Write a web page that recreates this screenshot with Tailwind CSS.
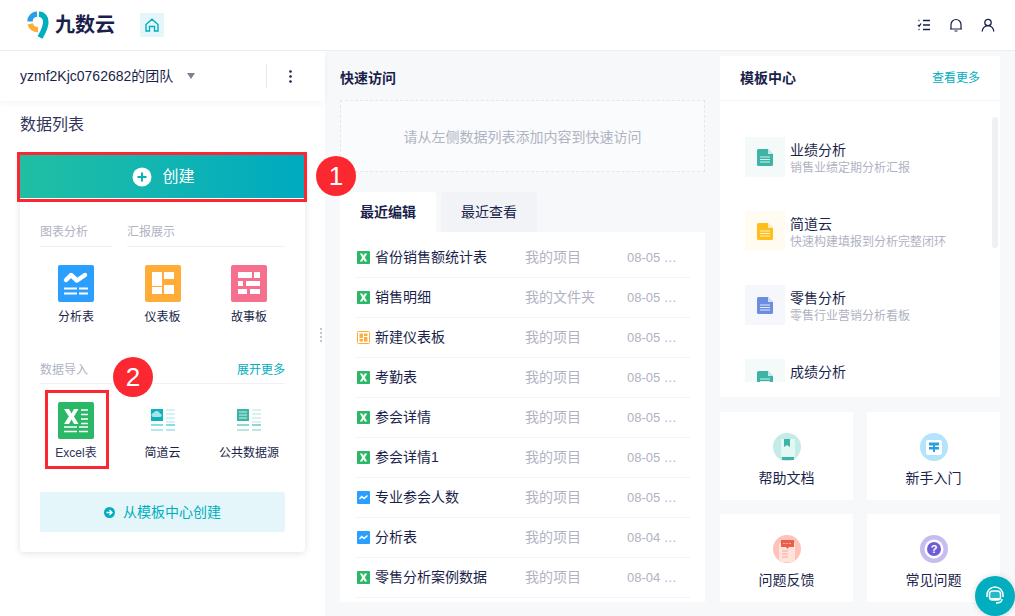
<!DOCTYPE html>
<html lang="zh-CN">
<head>
    <meta charset="UTF-8">
    <title>九数云</title>
    <script src="https://cdn.jsdelivr.net/npm/@tailwindcss/browser@4"></script>
</head>
<body class="h-[616px] w-[1015px] overflow-hidden bg-[#f7f8fa] font-['Liberation_Sans','Noto_Sans_CJK_SC',sans-serif] text-[14px] text-[#1a1f4b]">
    <!-- shared icons -->
    <svg class="hidden">
        <symbol id="xls" viewBox="0 0 13 13"><rect width="13" height="13" rx="1" fill="#2bb866"/><path d="M2.800 2.500h2.400l1.300 2.300 1.300-2.300h2.400L7.800 6.500l2.400 4H7.800L6.500 8.200 5.200 10.500H2.800l2.400-4z" fill="#fff"/></symbol>
        <symbol id="line" viewBox="0 0 13 13"><rect width="13" height="13" rx="1" fill="#2b9fff"/><path d="M2.500 8l2.200-2.500L7 7.500 10.500 4.500" fill="none" stroke="#fff" stroke-width="1.500"/></symbol>
        <symbol id="dash" viewBox="0 0 13 13"><rect x=".5" y=".5" width="12" height="12" rx="1" fill="#fff" stroke="#ffac38"/><path d="M2.500 2.500h3.500v4.500H2.500zM7 2.500h3.500V5H7zM2.500 8H6v2.500H2.500zM7 6h3.500v4.500H7z" fill="#ffac38"/></symbol>
        <symbol id="doc" viewBox="0 0 16 17"><path d="M1.500 0H11l5 5v10.500a1.500 1.500 0 0 1-1.500 1.500h-13A1.500 1.500 0 0 1 0 15.500v-14A1.500 1.500 0 0 1 1.500 0z" fill="currentColor"/><path d="M11 0l5 5h-5z" fill="#fff" opacity=".7"/><path d="M3 8h10M3 10.500h10M3 13h10" stroke="#fff" stroke-opacity=".8"/></symbol>
    </svg>

    <!-- Шапка -->
    <header class="flex h-[51px] items-center border-b border-[#eceef1] bg-white pl-[27px] pr-[20px]">
        <svg width="22" height="28" viewBox="0 0 22 28" fill="none" stroke-width="5.500">
            <path d="M3 10.500A7.500 7.500 0 0 1 10 3" stroke="#2b9fe6"/>
            <path d="M12 3A7.500 7.500 0 0 1 18.800 11C18.800 17 15.500 22 13 26.500" stroke="#00aebf"/>
            <path d="M3.200 12.800A7.500 7.500 0 0 0 11 18.500" stroke="#ffac38"/>
        </svg>
        <span class="ml-[6px] text-[20px] leading-none font-bold text-[#1a1f4b]">九数云</span>
        <div class="ml-[25px] flex h-6 w-6 items-center justify-center bg-[#e4f6f9]">
            <svg width="14" height="14" viewBox="0 0 14 14" fill="none" stroke="#00aebf" stroke-width="1.400"><path d="M1 6.500 7 1.200l6 5.300V13H9.500V8.500h-5V13H1z"/></svg>
        </div>
        <div class="ml-auto flex items-center gap-[18px]">
            <svg width="14" height="14" viewBox="0 0 14 14" fill="none" stroke="#1a1f4b" stroke-width="1.300"><path d="M6 2.500h7M6 7h7M6 11.500h7M1 7l1.200 1.200L4 5.500M1.500 2.500h1M1.500 11.500h1"/></svg>
            <svg width="14" height="14" viewBox="0 0 14 14" fill="none" stroke="#1a1f4b" stroke-width="1.200"><path d="M2 11V6.500a5 5 0 0 1 10 0V11zM1 11h12M5.500 13h3"/></svg>
            <svg width="14" height="14" viewBox="0 0 14 14" fill="none" stroke="#1a1f4b" stroke-width="1.300"><circle cx="7" cy="4.500" r="3.200"/><path d="M1.200 13.500a5.800 5.800 0 0 1 11.600 0"/></svg>
        </div>
    </header>

    <div class="flex h-[565px]">
        <!-- Сайдбар -->
        <aside class="relative h-full w-[325px] shrink-0 bg-white">
            <div class="flex h-[50px] items-center pl-5 pr-[33px] text-[14px] shadow-[0_3px_6px_rgba(30,40,80,0.04)]">
                <span>yzmf2Kjc0762682的团队</span>
                <span class="ml-[14px] h-0 w-0 border-x-[4px] border-t-[6px] border-x-transparent border-t-[#7c8090]"></span>
                <div class="ml-auto flex h-6 items-center border-l border-[#e8eaee] pl-[22px]">
                    <svg width="3" height="13" viewBox="0 0 3 13" fill="#1a1f4b"><circle cx="1.500" cy="1.500" r="1.300"/><circle cx="1.500" cy="6.500" r="1.300"/><circle cx="1.500" cy="11.500" r="1.300"/></svg>
                </div>
            </div>
            <h2 class="pl-5 pt-[14px] text-[16px] leading-[20px] text-[#30345a]">数据列表</h2>

            <div class="ml-5 mt-5 w-[285px] rounded-b-[4px] shadow-[0_1px_6px_rgba(30,40,80,0.14)]">
                <button class="flex h-[43px] w-full items-center justify-center gap-[10px] bg-gradient-to-r from-[#20bfa3] to-[#00aac0] pl-[2px] text-[16px] text-white">
                    <svg width="20" height="20" viewBox="0 0 20 20"><circle cx="10" cy="10" r="9.500" fill="#fff"/><path d="M10 5.500v9M5.500 10h9" stroke="#0bb2b2" stroke-width="2"/></svg>
                    创建
                </button>
                <div class="px-5 pb-5 pt-[26px]">
                    <div class="flex gap-[15px] text-[12px] leading-[16px] text-[#b0b3c3]">
                        <div class="w-[72px] border-b border-[#f0f1f5] pb-[6px]">图表分析</div>
                        <div class="flex-1 border-b border-[#f0f1f5] pb-[6px]">汇报展示</div>
                    </div>
                    <div class="mt-[18px] grid grid-cols-[72px_101px_72px] text-center text-[12px] leading-[16px]">
                        <div class="flex flex-col items-center">
                            <svg width="36" height="37" viewBox="0 0 36 37"><rect width="36" height="37" rx="2" fill="#2b9fff"/><path d="M8 15l5-5 6 5.500L27 10" fill="none" stroke="#fff" stroke-width="4.500" stroke-linecap="round" stroke-linejoin="round"/><path d="M6 23.500h13M21 23.500h9M6 28.500h13M21 28.500h9" stroke="#fff" stroke-width="2"/></svg>
                            <span class="mt-[7px]">分析表</span>
                        </div>
                        <div class="flex flex-col items-center">
                            <svg width="36" height="37" viewBox="0 0 36 37"><rect width="36" height="37" rx="2" fill="#ffac38"/><path d="M7 7h10v14H7zM19 7h10v7H19zM7 22h10v7H7zM19 20h10v9H19z" fill="#fff"/></svg>
                            <span class="mt-[7px]">仪表板</span>
                        </div>
                        <div class="flex flex-col items-center">
                            <svg width="36" height="37" viewBox="0 0 36 37"><rect width="36" height="37" rx="2" fill="#f56f8f"/><path d="M7 7h14v6H7zM23 7h6v6h-6zM7 16h5v5H7zM15 16h14v5H15zM7 24h9v5H7zM19 24h10v5H19z" fill="#fff"/></svg>
                            <span class="mt-[7px]">故事板</span>
                        </div>
                    </div>

                    <div class="mt-[37px] flex justify-between border-b border-[#f0f1f5] pb-[5px] text-[12px] leading-[16px]">
                        <span class="text-[#b0b3c3]">数据导入</span>
                        <span class="text-[#00aebf]">展开更多</span>
                    </div>
                    <div class="mt-[18px] grid grid-cols-[72px_101px_72px] text-center text-[12px] leading-[16px]">
                        <div class="flex flex-col items-center">
                            <svg width="36" height="37" viewBox="0 0 36 37"><rect width="36" height="37" rx="2" fill="#2bb866"/><path d="M6 7h5l2.500 4.500L16 7h4.500l-4.500 7.500 4.500 7.500H16l-2.500-4.500L11 22H6l4.800-7.500z" fill="#fff"/><path d="M23 8h7M23 12.500h7M23 17h7M23 21.500h7M6 25h13M21 25h9M6 29.500h13M21 29.500h9" stroke="#fff" stroke-width="1.600"/></svg>
                            <span class="mt-[6px] text-[#30345a]">Excel表</span>
                        </div>
                        <div class="flex flex-col items-center">
                            <svg width="36" height="37" viewBox="0 0 36 37"><rect x="6" y="7" width="12" height="12" fill="#0cb3bf"/><path d="M8.500 15a2 2 0 0 1 0-4 3.500 3.500 0 0 1 6.500 .5 1.800 1.800 0 0 1 .5 3.500z" fill="#a8e3ea"/><path d="M21 8h9M21 12h9M21 16h9M21 20h9" stroke="#c9eff3" stroke-width="1.600"/><path d="M6 23h12M21 23h9" stroke="#86dde3" stroke-width="2"/><path d="M6 28h12M21 28h9" stroke="#b3e9ed" stroke-width="2"/></svg>
                            <span class="mt-[6px]">简道云</span>
                        </div>
                        <div class="flex flex-col items-center">
                            <svg width="36" height="37" viewBox="0 0 36 37"><rect x="6" y="7" width="12" height="12" fill="#3cb5a6"/><path d="M8 10h8M8 13h8M8 16h8" stroke="#d3f0ec"/><path d="M21 8h9M21 12h9M21 16h9M21 20h9" stroke="#cdeee9" stroke-width="1.600"/><path d="M6 23h12M21 23h9" stroke="#8ed9cf" stroke-width="2"/><path d="M6 28h12M21 28h9" stroke="#b8e6e0" stroke-width="2"/></svg>
                            <span class="mt-[6px] whitespace-nowrap">公共数据源</span>
                        </div>
                    </div>
                    <div class="mt-[31px] flex h-10 items-center justify-center gap-[8px] rounded-[2px] bg-[#e4f6f9] text-[#00aebf]">
                        <svg width="11" height="11" viewBox="0 0 11 11"><circle cx="5.500" cy="5.500" r="5.500" fill="#00aebf"/><path d="M2.500 5.500h5M5.500 3l2.500 2.500L5.500 8" fill="none" stroke="#fff" stroke-width="1.300"/></svg>
                        <span>从模板中心创建</span>
                    </div>
                </div>
            </div>

            <!-- Красные рамки и номера поверх контента -->
            <div class="absolute left-[17px] top-[101px] h-[50px] w-[290px] border-[3px] border-[#fb2832]"></div>
            <div class="absolute left-[316px] top-[105px] z-10 flex h-10 w-10 items-center justify-center rounded-full bg-[#fb2832] text-[26px] text-white">1</div>
            <div class="absolute left-[45px] top-[339px] h-[79px] w-[64px] border-[3px] border-[#fb2832]"></div>
            <div class="absolute left-[113px] top-[306px] flex h-10 w-10 items-center justify-center rounded-full bg-[#fb2832] text-[26px] text-white">2</div>
            <div class="absolute right-[3px] top-[277px] flex flex-col gap-[2px]">
                <i class="block h-[2px] w-[2px] bg-[#c4c7d0]"></i><i class="block h-[2px] w-[2px] bg-[#c4c7d0]"></i><i class="block h-[2px] w-[2px] bg-[#c4c7d0]"></i><i class="block h-[2px] w-[2px] bg-[#c4c7d0]"></i>
            </div>
        </aside>

        <!-- Центральная колонка -->
        <main class="ml-[15px] w-[365px] shrink-0">
            <h3 class="pt-[19px] leading-[16px] font-bold">快速访问</h3>
            <div class="mt-[14px] flex h-[72px] items-center justify-center border border-dashed border-[#e4e6ec] bg-[#fafbfc] pt-[2px] text-[#b0b3c3]">请从左侧数据列表添加内容到快速访问</div>
            <div class="mt-5 flex h-10 gap-[5px] text-center leading-10">
                <div class="w-[96px] rounded-t-[4px] bg-white font-bold">最近编辑</div>
                <div class="w-[96px] rounded-t-[4px] bg-[#f2f3f7]">最近查看</div>
            </div>
            <div class="h-[370px] bg-white px-[15px] pt-[6px]">
                <div class="flex h-10 items-center border-b border-[#f2f3f6] pl-[2px]"><svg class="h-[13px] w-[13px]"><use href="#xls"/></svg><span class="ml-[5px] w-[150px]">省份销售额统计表</span><span class="w-[102px] text-[#b0b3c3]">我的项目</span><span class="whitespace-nowrap text-[13px] text-[#b0b3c3]">08-05 …</span></div>
                <div class="flex h-10 items-center border-b border-[#f2f3f6] pl-[2px]"><svg class="h-[13px] w-[13px]"><use href="#xls"/></svg><span class="ml-[5px] w-[150px]">销售明细</span><span class="w-[102px] text-[#b0b3c3]">我的文件夹</span><span class="whitespace-nowrap text-[13px] text-[#b0b3c3]">08-05 …</span></div>
                <div class="flex h-10 items-center border-b border-[#f2f3f6] pl-[2px]"><svg class="h-[13px] w-[13px]"><use href="#dash"/></svg><span class="ml-[5px] w-[150px]">新建仪表板</span><span class="w-[102px] text-[#b0b3c3]">我的项目</span><span class="whitespace-nowrap text-[13px] text-[#b0b3c3]">08-05 …</span></div>
                <div class="flex h-10 items-center border-b border-[#f2f3f6] pl-[2px]"><svg class="h-[13px] w-[13px]"><use href="#xls"/></svg><span class="ml-[5px] w-[150px]">考勤表</span><span class="w-[102px] text-[#b0b3c3]">我的项目</span><span class="whitespace-nowrap text-[13px] text-[#b0b3c3]">08-05 …</span></div>
                <div class="flex h-10 items-center border-b border-[#f2f3f6] pl-[2px]"><svg class="h-[13px] w-[13px]"><use href="#xls"/></svg><span class="ml-[5px] w-[150px]">参会详情</span><span class="w-[102px] text-[#b0b3c3]">我的项目</span><span class="whitespace-nowrap text-[13px] text-[#b0b3c3]">08-05 …</span></div>
                <div class="flex h-10 items-center border-b border-[#f2f3f6] pl-[2px]"><svg class="h-[13px] w-[13px]"><use href="#xls"/></svg><span class="ml-[5px] w-[150px]">参会详情1</span><span class="w-[102px] text-[#b0b3c3]">我的项目</span><span class="whitespace-nowrap text-[13px] text-[#b0b3c3]">08-05 …</span></div>
                <div class="flex h-10 items-center border-b border-[#f2f3f6] pl-[2px]"><svg class="h-[13px] w-[13px]"><use href="#line"/></svg><span class="ml-[5px] w-[150px]">专业参会人数</span><span class="w-[102px] text-[#b0b3c3]">我的项目</span><span class="whitespace-nowrap text-[13px] text-[#b0b3c3]">08-05 …</span></div>
                <div class="flex h-10 items-center border-b border-[#f2f3f6] pl-[2px]"><svg class="h-[13px] w-[13px]"><use href="#line"/></svg><span class="ml-[5px] w-[150px]">分析表</span><span class="w-[102px] text-[#b0b3c3]">我的项目</span><span class="whitespace-nowrap text-[13px] text-[#b0b3c3]">08-04 …</span></div>
                <div class="flex h-10 items-center border-b border-[#f2f3f6] pl-[2px]"><svg class="h-[13px] w-[13px]"><use href="#xls"/></svg><span class="ml-[5px] w-[150px]">零售分析案例数据</span><span class="w-[102px] text-[#b0b3c3]">我的项目</span><span class="whitespace-nowrap text-[13px] text-[#b0b3c3]">08-04 …</span></div>
            </div>
        </main>

        <!-- Правая колонка -->
        <section class="ml-[15px] w-[280px] shrink-0 pt-[5px]">
            <div class="h-[341px] bg-white">
                <div class="flex h-[45px] items-center justify-between border-b border-[#f2f3f6] px-5">
                    <span class="font-bold">模板中心</span>
                    <span class="text-[12px] text-[#00aebf]">查看更多</span>
                </div>
                <div class="relative h-[281px] overflow-hidden pl-[25px] pt-[36px]">
                    <div class="absolute right-[2px] top-[16px] h-[131px] w-[6px] rounded-full bg-[#eef0f2]"></div>
                    <div class="flex h-[74px] items-start"><div class="flex h-10 w-10 items-center justify-center bg-[#f4fafa] text-[#3cb5a6]"><svg class="h-[17px] w-[16px]"><use href="#doc"/></svg></div><div class="ml-[5px]"><div class="mt-[4px] leading-[18px]">业绩分析</div><div class="mt-[1px] text-[12px] leading-[16px] text-[#b0b3c3]">销售业绩定期分析汇报</div></div></div>
                    <div class="flex h-[74px] items-start"><div class="flex h-10 w-10 items-center justify-center bg-[#fffbf0] text-[#ffbe1a]"><svg class="h-[17px] w-[16px]"><use href="#doc"/></svg></div><div class="ml-[5px]"><div class="mt-[4px] leading-[18px]">简道云</div><div class="mt-[1px] text-[12px] leading-[16px] text-[#b0b3c3]">快速构建填报到分析完整闭环</div></div></div>
                    <div class="flex h-[74px] items-start"><div class="flex h-10 w-10 items-center justify-center bg-[#f6f7fc] text-[#6b8fe0]"><svg class="h-[17px] w-[16px]"><use href="#doc"/></svg></div><div class="ml-[5px]"><div class="mt-[4px] leading-[18px]">零售分析</div><div class="mt-[1px] text-[12px] leading-[16px] text-[#b0b3c3]">零售行业营销分析看板</div></div></div>
                    <div class="flex h-[74px] items-start"><div class="flex h-10 w-10 items-center justify-center bg-[#f4fafa] text-[#3cb5a6]"><svg class="h-[17px] w-[16px]"><use href="#doc"/></svg></div><div class="ml-[5px]"><div class="mt-[4px] leading-[18px]">成绩分析</div></div></div>
                </div>
            </div>
            <div class="mt-[15px] grid grid-cols-[133px_133px] grid-rows-[88px_88px] gap-[14px] text-center">
                <div class="flex flex-col items-center bg-white pt-[21px]">
                    <svg width="28" height="28" viewBox="0 0 28 28"><circle cx="14" cy="14" r="14" fill="#c3ece6"/><path d="M8 6h14v18H8z" fill="#e3f7f4"/><path d="M11 6h6v8l-3-2-3 2z" fill="#3cb5a6"/><path d="M9 24h12v3H9z" fill="#3cb5a6"/></svg>
                    <span class="mt-2 leading-[18px]">帮助文档</span>
                </div>
                <div class="flex flex-col items-center bg-white pt-[21px]">
                    <svg width="28" height="28" viewBox="0 0 28 28"><circle cx="14" cy="14" r="14" fill="#b3e4fb"/><rect x="6" y="7" width="16" height="15" rx="2" fill="#fff"/><path d="M9 9.500h10v3H9zM9 14h10v2.500H9z" fill="#2a9fe0"/><path d="M13 12h2v7h-2z" fill="#2a9fe0"/></svg>
                    <span class="mt-2 leading-[18px]">新手入门</span>
                </div>
                <div class="flex flex-col items-center bg-white pt-[21px]">
                    <svg width="28" height="28" viewBox="0 0 28 28"><circle cx="14" cy="14" r="14" fill="#fdc3b8"/><path d="M6 8h16v19H6z" fill="#ffe2dc"/><path d="M8 5h13v7h-5l-1.500 2L13 12H8z" fill="#e8604a"/><path d="M10.500 8.500h1M13.500 8.500h1M16.500 8.500h1" stroke="#fff"/><path d="M9 16h6M9 19h6M9 22h6" stroke="#f9a898"/></svg>
                    <span class="mt-2 leading-[18px]">问题反馈</span>
                </div>
                <div class="flex flex-col items-center bg-white pt-[21px]">
                    <svg width="28" height="28" viewBox="0 0 28 28"><circle cx="14" cy="14" r="14" fill="#c7bcf0"/><circle cx="14" cy="14" r="9.500" fill="#fff"/><circle cx="14" cy="14" r="7" fill="#6f5bd6"/><text x="14" y="18" text-anchor="middle" font-size="11" font-weight="700" fill="#fff">?</text></svg>
                    <span class="mt-2 leading-[18px]">常见问题</span>
                </div>
            </div>
        </section>
    </div>

    <!-- Кнопка чата -->
    <div class="absolute left-[975px] top-[576px] flex h-10 w-10 items-center justify-center rounded-full bg-[#00aebf] shadow-[0_0_6px_rgba(0,0,0,0.15)]">
        <svg width="22" height="22" viewBox="0 0 22 22" fill="none" stroke="#fff" stroke-width="1.500"><path d="M3 12V10a8 8 0 0 1 16 0v2"/><rect x="5.500" y="6" width="11" height="9" rx="3" fill="#fff" fill-opacity=".15"/><path d="M7 13h8v2H7z" fill="#fff" stroke="none"/><path d="M18 14c0 3-3 4-6 4"/></svg>
    </div>
</body>
</html>
